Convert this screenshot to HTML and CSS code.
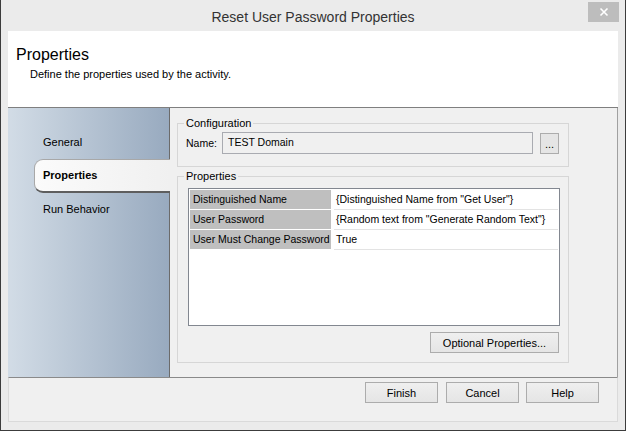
FILE: index.html
```html
<!DOCTYPE html>
<html>
<head>
<meta charset="utf-8">
<link rel="stylesheet" href="styles.css">
</head>
<body>
<div class="window">
  <div class="titlebar">
    <span class="title">Reset User Password Properties</span>
    <span class="close"><svg width="10" height="10" viewBox="0 0 10 10"><path d="M1.5 1.5 L8.5 8.5 M8.5 1.5 L1.5 8.5" stroke="#fff" stroke-width="1.6" fill="none"/></svg></span>
  </div>
  <div class="frame">
    <div class="client">
      <div class="header">
        <h1>Properties</h1>
        <p>Define the properties used by the activity.</p>
      </div>
      <div class="main">
        <nav class="nav">
          <div class="nav-item">General</div>
          <div class="nav-item active">Properties</div>
          <div class="nav-item">Run Behavior</div>
        </nav>
        <div class="panel">
          <fieldset class="group config">
            <legend>Configuration</legend>
            <div class="name-row">
              <label class="name-label">Name:</label>
              <div class="textbox">TEST Domain</div>
              <button class="browse">...</button>
            </div>
          </fieldset>
          <fieldset class="group props">
            <legend>Properties</legend>
            <div class="grid">
              <div class="row"><div class="cell-name">Distinguished Name</div><div class="cell-value">{Distinguished Name from "Get User"}</div></div>
              <div class="row"><div class="cell-name">User Password</div><div class="cell-value">{Random text from "Generate Random Text"}</div></div>
              <div class="row"><div class="cell-name">User Must Change Password</div><div class="cell-value">True</div></div>
            </div>
            <div class="opt-row"><button class="btn opt">Optional Properties...</button></div>
          </fieldset>
        </div>
      </div>
      <div class="footer">
        <button class="btn finish">Finish</button>
        <button class="btn">Cancel</button>
        <button class="btn">Help</button>
      </div>
    </div>
  </div>
</div>
</body>
</html>
```
FILE: styles.css
```css
body {
  margin: 0;
  font-family: "Liberation Sans", Arial, sans-serif;
  font-size: 10.5px;
  color: #000;
}
.window {
  width: 626px;
  height: 431px;
  box-sizing: border-box;
  background: #ebebeb;
  border: 1px solid #3c3c3c;
  border-top: none;
  display: flex;
  flex-direction: column;
  white-space: nowrap;
}
.titlebar {
  position: relative;
  height: 31px;
  flex: none;
  text-align: center;
  font-size: 14px;
  line-height: 34px;
  color: #333;
}
.close {
  position: absolute;
  right: 6px;
  top: 2px;
  width: 31px;
  height: 20px;
  background: #bdbdbd;
  display: flex;
  align-items: center;
  justify-content: center;
}
.frame {
  flex: 1;
  display: flex;
  padding: 0 7px 8px;
}
.client {
  flex: 1;
  display: flex;
  flex-direction: column;
  background: #f0f0f0;
}
.header {
  height: 77px;
  flex: none;
  box-sizing: border-box;
  background: #fff;
  border-bottom: 1px solid #7f7f7f;
  padding: 14px 0 0 8px;
}
.header h1 {
  margin: 0;
  font-size: 16px;
  line-height: 19px;
  font-weight: normal;
}
.header p {
  margin: 4px 0 0 14px;
  line-height: 13px;
  font-size: 11px;
}
.main {
  height: 269px;
  flex: none;
  display: flex;
}
.nav {
  width: 162px;
  box-sizing: border-box;
  border-right: 1px solid #6b6b6b;
  background: linear-gradient(to right, #d2dce6, #98aabf);
  padding: 18px 0 0 26px;
  font-size: 11px;
}
.nav-item {
  height: 33px;
  line-height: 33px;
  padding-left: 9px;
}
.nav-item.active {
  position: relative;
  height: 34px;
  box-sizing: border-box;
  margin-right: -1px;
  padding-left: 8px;
  line-height: 31px;
  font-weight: bold;
  background: linear-gradient(to right, #fbfbfb, #f0f0f0);
  border: 1px solid #a8a8a8;
  border-right: none;
  border-bottom: 2px solid #5e5e5e;
  border-radius: 9px 0 0 9px;
}
.panel {
  flex: 1;
  border-right: 1px solid #a0a0a0;
  padding-left: 7px;
}
.group {
  margin: 0;
  width: 392px;
  box-sizing: border-box;
  min-width: 0;
  border: 1px solid #d6d6d6;
  padding: 0 8px 12px 6px;
}
.group legend {
  padding: 0 2px;
  line-height: 13px;
  font-size: 11px;
}
.config {
  margin-top: 9px;
}
.name-row {
  display: flex;
  align-items: flex-start;
  margin: 2px 0 0 2px;
}
.name-label {
  width: 36px;
  line-height: 22px;
}
.textbox {
  width: 311px;
  height: 22px;
  box-sizing: border-box;
  border: 1px solid #a9abb1;
  background: #f0f0f0;
  padding: 3px 5px;
  line-height: 13px;
}
.browse {
  width: 19px;
  height: 21px;
  margin: 1px 0 0 7px;
  padding: 0 0 3px;
  box-sizing: border-box;
  border: 1px solid #acacac;
  background: #e5e5e5;
  font-family: inherit;
  font-size: 11px;
  line-height: 11px;
  display: flex;
  align-items: flex-end;
  justify-content: center;
}
.props {
  margin-top: 3px;
  padding-bottom: 9px;
}
.grid {
  margin: 5px 0 0 4px;
  width: 372px;
  height: 138px;
  box-sizing: border-box;
  border: 1px solid #828790;
  background: #fff;
  padding: 1px 1px 0 1px;
}
.row {
  display: flex;
  height: 20px;
}
.cell-name {
  width: 141px;
  flex: none;
  height: 19px;
  background: #bfbfbf;
  padding-left: 3px;
  box-sizing: border-box;
  line-height: 19px;
  overflow: hidden;
}
.cell-value {
  flex: 1;
  margin-left: 3px;
  height: 20px;
  box-sizing: border-box;
  border-bottom: 1px solid #e3e3e3;
  padding-left: 2px;
  line-height: 19px;
}
.opt-row {
  display: flex;
  justify-content: flex-end;
  margin-top: 6px;
}
.btn {
  height: 21px;
  width: 73px;
  box-sizing: border-box;
  border: 1px solid #acacac;
  background: linear-gradient(#efefef, #e5e5e5);
  font-family: inherit;
  font-size: 11px;
  color: #000;
  padding: 0;
}
.opt {
  width: 129px;
  margin-right: 1px;
}
.footer {
  flex: 1;
  display: flex;
  justify-content: flex-end;
  align-items: flex-start;
  gap: 7px;
  padding: 4px 18px 0 0;
  border-top: 1px solid #8a8a8a;
  border-left: 1px solid #dadada;
  border-right: 1px solid #dadada;
  border-bottom: 1px solid #dadada;
}
.finish {
  margin-right: 1px;
}
```
